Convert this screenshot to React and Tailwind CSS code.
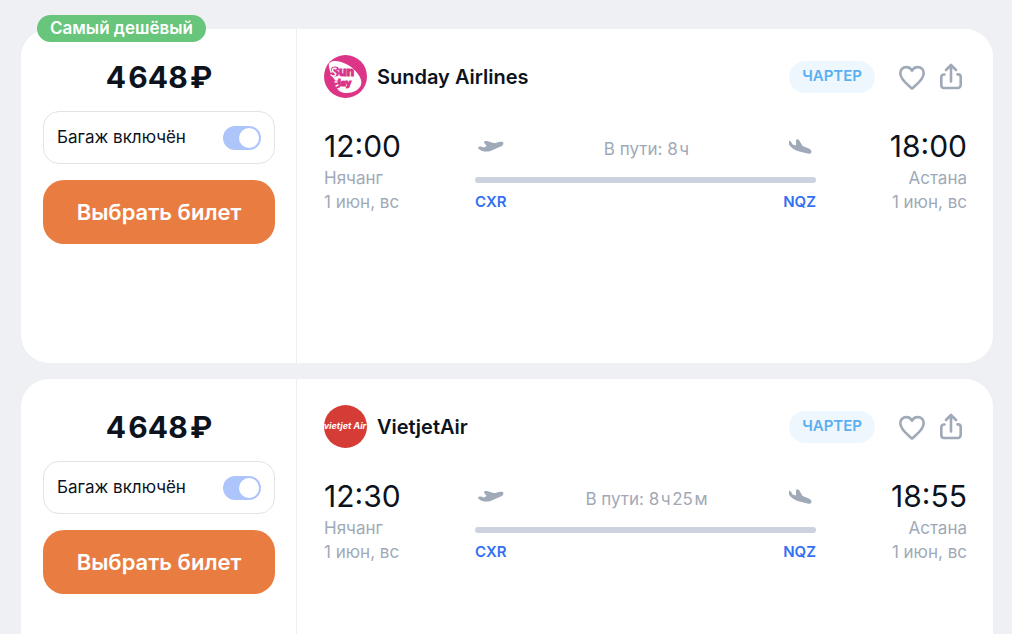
const tickets = [
  {
    id: 'sunday',
    cheapest: true,
    price: '4\u200A648\u200A₽',
    airline: 'Sunday Airlines',
    Logo: SundayLogo,
    from: { time: '12:00', city: 'Нячанг', date: '1 июн, вс', code: 'CXR' },
    to: { time: '18:00', city: 'Астана', date: '1 июн, вс', code: 'NQZ' },
    duration: '8\u200Aч',
  },
  {
    id: 'vietjet',
    cheapest: false,
    price: '4\u200A648\u200A₽',
    airline: 'VietjetAir',
    Logo: VietjetLogo,
    from: { time: '12:30', city: 'Нячанг', date: '1 июн, вс', code: 'CXR' },
    to: { time: '18:55', city: 'Астана', date: '1 июн, вс', code: 'NQZ' },
    duration: '8\u200Aч\u200A25\u200Aм',
  },
];

function SundayLogo() {
  return (
    <svg viewBox="0 0 43 43" className="size-[43px] shrink-0" aria-hidden="true">
      <circle cx="21.5" cy="21.5" r="21.5" fill="#dc3486" />
      <path
        d="M5 12C4 8 7 5.500 12 6c9 1 17 6 22 13 3 4 4 8 3 11-2 5-8 8-14 8-5 0-9-2-10-5 3 0 4-1 3-4C10 26 6 18 5 12z"
        fill="#fff"
      />
      <g fill="#dc3486" stroke="#dc3486" strokeWidth="1" fontFamily="Inter, sans-serif" fontWeight="800">
        <text x="7" y="21" fontSize="12">Sun</text>
        <text x="11" y="31" fontSize="9">day</text>
      </g>
      <g fill="none" stroke="#fff" strokeWidth="1.4" strokeLinecap="round">
        <path d="M12 13.500c-3-1-4.500 1-3 3 2 1.500 4 2 2 4-1 1-3 .5-4-.5" />
        <path d="M13 27h-2M14 30l-2 1" />
      </g>
    </svg>
  );
}

function VietjetLogo() {
  return (
    <svg viewBox="0 0 43 43" className="size-[43px] shrink-0" aria-hidden="true">
      <circle cx="21.5" cy="21.5" r="21.5" fill="#d63c36" />
      <text x="21" y="24" textAnchor="middle" fill="#fff" fontSize="9" fontFamily="Inter, sans-serif" fontWeight="700" fontStyle="italic">
        vietjet Air
      </text>
    </svg>
  );
}

function HeartIcon() {
  return (
    <svg viewBox="0 0 32 32" className="size-8" fill="none" stroke="currentColor" strokeWidth="2.6" strokeLinejoin="round">
      <path d="M16 27.600C12.600 24.200 4.300 18.800 4.300 12.200c0-3.700 2.700-6.100 6-6.100 2.500 0 4.600 1.400 5.700 3.700 1.100-2.300 3.200-3.700 5.700-3.700 3.300 0 6 2.400 6 6.100 0 6.600-8.300 12-11.700 15.400z" />
    </svg>
  );
}

function ShareIcon() {
  return (
    <svg viewBox="0 0 32 32" className="size-8" fill="none" stroke="currentColor" strokeWidth="2.6" strokeLinecap="round" strokeLinejoin="round">
      <path d="M16 20.500V4.500M11 9l5-5 5 5" />
      <path d="M9.500 13.500H9a2.700 2.700 0 0 0-2.700 2.700v8A2.900 2.900 0 0 0 9.200 27h13.600a2.900 2.900 0 0 0 2.900-2.900v-8a2.700 2.700 0 0 0-2.700-2.700h-.5" />
    </svg>
  );
}

function TakeoffIcon() {
  return (
    <svg viewBox="0 0 26 14" className="h-3.5 w-[26px]" fill="currentColor" aria-hidden="true">
      <path d="M0 8.200c.8-.9 2.400-1 3.600-.5l2.400.7 2.600-1.500L6 3.500C5.700 2.200 7.500 1.700 9 2.100l7.500 2.200 4.500-1.300c2.400-.5 4.100-.2 4.400 1 .2 1.400-.8 2.800-2.700 3.600l-5.700 2.300-4.500 2c-2.500.9-5.700.9-8 .2C2.500 11.600.6 10.300 0 8.200z" />
    </svg>
  );
}

function LandingIcon() {
  return (
    <svg viewBox="0 0 24 16" className="h-4 w-6" fill="currentColor" aria-hidden="true">
      <path d="M-1 2C.2 1.400 1.500 1.800 2.200 2.900l1.300 2.500 3.500 1.200V1.200C7.500.1 9.300-.1 10 .9l3.600 6 6.200 2.600c2 .9 2.900 2.300 2.600 3.700-.4 1.400-2 1.900-4 1.400L8.500 12C3.500 10.200-.8 6.800-1 2z" />
    </svg>
  );
}

function BaggageToggle({ id }) {
  return (
    <label htmlFor={id} className="mt-3.5 flex h-[53px] items-center justify-between rounded-2xl border border-[#e2e3e6] px-[13px]">
      <span className="text-[17px] text-[#0c131d]">Багаж включён</span>
      <input
        id={id}
        type="checkbox"
        role="switch"
        defaultChecked
        className="h-6 w-[38px] appearance-none rounded-full bg-[#d0d5dd] p-[2px] before:block before:size-5 before:rounded-full before:bg-white checked:bg-[#adc5fb] checked:before:ml-[14px]"
      />
    </label>
  );
}

function Endpoint({ point, align }) {
  return (
    <div className={align === 'right' ? 'text-right' : 'text-left'}>
      <p className="text-[30px] leading-10 text-[#0c131d]">{point.time}</p>
      <p className="text-[17px] leading-6 text-[#9fa9b7]">{point.city}</p>
      <p className="text-[17px] leading-6 text-[#9fa9b7]">{point.date}</p>
    </div>
  );
}

function Ticket({ ticket }) {
  const { Logo } = ticket;

  return (
    <article className="relative flex min-h-[334px] rounded-[28px] bg-white">
      {ticket.cheapest && (
        <span className="absolute -top-3.5 left-4 flex h-[27px] items-center rounded-full bg-[#67c57c] px-[13px] text-[17px] font-semibold whitespace-nowrap text-white">
          Самый дешёвый
        </span>
      )}

      <div className="w-[276px] shrink-0 border-r border-[#eeeff2] px-[22px] pt-7 pr-[21px]">
        <p className="text-center text-[30px] leading-10 font-bold text-[#0c131d]">{ticket.price}</p>
        <BaggageToggle id={`baggage-${ticket.id}`} />
        <button type="button" className="mt-4 h-16 w-full rounded-[21px] bg-[#e97d41] text-[22px] font-semibold text-white">
          Выбрать билет
        </button>
      </div>

      <div className="min-w-0 flex-1 pt-[26px] pr-[26px] pl-[27px]">
        <header className="flex items-center">
          <Logo />
          <h2 className="ml-2.5 text-xl font-semibold text-[#0c131d]">{ticket.airline}</h2>
          <span className="mr-[21px] ml-auto flex h-8 items-center rounded-full bg-[#eef7fe] px-[13px] text-[15px] font-semibold text-[#5aaff0]">
            ЧАРТЕР
          </span>
          <div className="flex gap-[7px] text-[#9fa9b7]">
            <button type="button" aria-label="В избранное">
              <HeartIcon />
            </button>
            <button type="button" aria-label="Поделиться">
              <ShareIcon />
            </button>
          </div>
        </header>

        <div className="mt-7 grid grid-cols-[151px_1fr_151px]">
          <Endpoint point={ticket.from} align="left" />
          <div>
            <div className="flex h-[51px] items-start justify-between px-[3px] pt-[13px] text-[#9fa9b7]">
              <TakeoffIcon />
              <span className="text-[17px] leading-5">В пути: {ticket.duration}</span>
              <LandingIcon />
            </div>
            <div className="h-1.5 rounded-full bg-[#ccd3de]" />
            <div className="mt-[9px] flex justify-between text-[15px] leading-5 font-semibold text-[#3470f4]">
              <span>{ticket.from.code}</span>
              <span>{ticket.to.code}</span>
            </div>
          </div>
          <Endpoint point={ticket.to} align="right" />
        </div>
      </div>
    </article>
  );
}

export default function App() {
  return (
    <main className="h-screen overflow-hidden bg-[#eff0f4] pt-[29px] pr-[19px] pl-[21px] font-['Inter',sans-serif]">
      <div className="flex flex-col gap-4">
        {tickets.map((ticket) => (
          <Ticket key={ticket.id} ticket={ticket} />
        ))}
      </div>
    </main>
  );
}
